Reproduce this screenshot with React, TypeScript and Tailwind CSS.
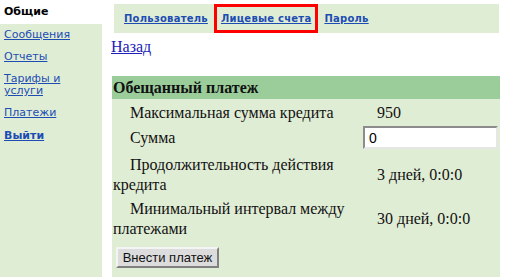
import * as React from "react";

const sideLinks = [
  { label: "Сообщения", mt: "mt-[5px]" },
  { label: "Отчеты", mt: "mt-[10px]" },
  { label: "Тарифы и услуги", mt: "mt-[10px]" },
  { label: "Платежи", mt: "mt-[10px]" },
];

const tabs = [
  { label: "Пользователь", active: false },
  { label: "Лицевые счета", active: true },
  { label: "Пароль", active: false },
];

export default function App() {
  return (
    <div className="flex h-[277px] w-[510px] overflow-hidden bg-white">
      {/* Left menu */}
      <div className="flex w-[102px] shrink-0 flex-col bg-[#e0edd5] font-['DejaVu_Sans',sans-serif] text-[11px] leading-[12px]">
        <div className="flex h-[24px] items-center bg-white pl-[4px] font-bold text-black">
          Общие
        </div>
        {sideLinks.map((item) => (
          <a
            key={item.label}
            href="#"
            className={`${item.mt} block w-[90px] pl-[4px] text-[#1d4db3] underline`}
          >
            {item.label}
          </a>
        ))}
        <a href="#" className="mt-[11px] block pl-[4px] font-bold text-[#1d4db3] underline">
          Выйти
        </a>
      </div>

      {/* Main */}
      <div className="flex w-[398px] flex-col pl-[9px]">
        <div className="ml-[3px] mt-[4px] flex h-[29px] w-[385px] items-stretch bg-[#e0edd5] pl-[4px] font-['DejaVu_Sans',sans-serif] text-[10px] font-bold tracking-[0.25px]">
          {tabs.map((t) => (
            <div
              key={t.label}
              className={`flex items-center border-[3px] ${
                t.active ? "border-[#ff0000] px-[4px]" : "border-transparent px-[3px]"
              }`}
            >
              <a href="#" className="text-[#1d4db3] underline">
                {t.label}
              </a>
            </div>
          ))}
        </div>

        <a
          href="#"
          className="mt-[5px] self-start font-['Liberation_Serif',serif] text-[16px] leading-[18px] text-[#2020b8] underline"
        >
          Назад
        </a>

        {/* Promised payment panel */}
        <div className="ml-[1px] mt-[20px] flex w-[388px] flex-1 flex-col bg-[#e0edd5] font-['Liberation_Serif',serif] text-[16px] text-[#111]">
          <div className="flex h-[23px] items-center bg-[#9bcd9b] pl-[1px] font-bold">
            Обещанный платеж
          </div>

          <div className="mt-[4px] flex h-[20px] items-center leading-[20px]">
            <div className="w-[251px] pl-[1px] indent-[17px]">Максимальная сумма кредита</div>
            <div className="pl-[14px]">950</div>
          </div>

          <div className="mt-[3px] flex h-[23px] items-center">
            <div className="w-[251px] pl-[1px] indent-[17px] leading-[20px]">Сумма</div>
            <input
              defaultValue="0"
              className="h-[23px] w-[135px] border-2 border-b-[#e6e6e6] border-l-[#8c8c8c] border-r-[#e6e6e6] border-t-[#8c8c8c] bg-white pl-[4px] font-['Liberation_Sans',sans-serif] text-[14px] text-black outline-none"
            />
          </div>

          <div className="mt-[6px] flex items-center leading-[20px]">
            <div className="w-[251px] pl-[1px] indent-[17px]">
              Продолжительность действия кредита
            </div>
            <div className="pl-[14px]">3 дней, 0:0:0</div>
          </div>

          <div className="mt-[4px] flex items-center leading-[20px]">
            <div className="w-[251px] pl-[1px] indent-[17px]">
              Минимальный интервал между платежами
            </div>
            <div className="pl-[14px]">30 дней, 0:0:0</div>
          </div>

          <div className="mt-[6px] pl-[4px]">
            <button className="h-[21px] w-[103px] border-2 border-b-[#808080] border-l-[#f4f4f4] border-r-[#808080] border-t-[#f4f4f4] bg-[#dcdcdc] font-['Liberation_Sans',sans-serif] text-[13px] leading-[15px] text-[#111]">
              Внести платеж
            </button>
          </div>
        </div>
      </div>
    </div>
  );
}
